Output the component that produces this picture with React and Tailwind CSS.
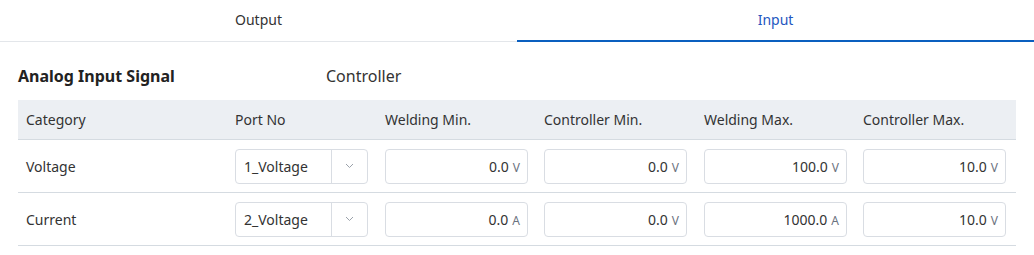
import React from "react";

const font = { fontFamily: '"Noto Sans", "Open Sans", sans-serif' };

function Chevron() {
  return (
    <svg width="9" height="6" viewBox="0 0 9 6" fill="none">
      <path d="M1 1l3.5 3.5L8 1" stroke="#9aa1aa" strokeWidth="1" />
    </svg>
  );
}

function Select({ value }) {
  return (
    <div className="flex h-[35px] w-[133px] items-stretch rounded-[4px] border border-[#d9dde3] bg-white">
      <div className="flex flex-1 items-center pl-[8px] text-[14px] text-[#333]">{value}</div>
      <div className="flex w-[36px] items-center justify-center border-l border-[#d9dde3]">
        <Chevron />
      </div>
    </div>
  );
}

function NumInput({ value, unit }) {
  return (
    <div className="flex h-[35px] w-[143px] items-center justify-end rounded-[4px] border border-[#d9dde3] bg-white pr-[7px]">
      <div className="flex items-baseline">
        <span className="text-[14px] text-[#333]">{value}</span>
        <span className="ml-[4px] text-[12px] text-[#6b7280]">{unit}</span>
      </div>
    </div>
  );
}

const rows = [
  { cat: "Voltage", port: "1_Voltage", vals: [["0.0", "V"], ["0.0", "V"], ["100.0", "V"], ["10.0", "V"]] },
  { cat: "Current", port: "2_Voltage", vals: [["0.0", "A"], ["0.0", "V"], ["1000.0", "A"], ["10.0", "V"]] },
];

const colW = ["w-[209px]", "w-[150px]", "w-[159px]", "w-[160px]", "w-[159px]", "flex-1"];

export default function App() {
  return (
    <div className="h-[255px] w-[1034px] bg-white" style={font}>
      <div className="flex h-[42px] border-b border-[#e3e6ea]">
        <div className="flex flex-1 items-center justify-center pb-[2px] text-[14px] text-[#333]">Output</div>
        <div className="relative flex flex-1 items-center justify-center pb-[2px] text-[14px] text-[#2456c0]">
          Input
          <div className="absolute bottom-[-1px] left-0 right-0 h-[2px] bg-[#0a5fbf]" />
        </div>
      </div>
      <div className="px-[18px]">
        <div className="flex h-[58px] items-center pt-[10px]">
          <div className="w-[308px] text-[16px] font-bold text-[#222]">Analog Input Signal</div>
          <div className="text-[16px] text-[#333]">Controller</div>
        </div>
        <div className="flex h-[40px] items-center border-b border-[#d5dbe1] bg-[#eceff3] text-[14px] text-[#333]">
          {["Category", "Port No", "Welding Min.", "Controller Min.", "Welding Max.", "Controller Max."].map((h, i) => (
            <div key={h} className={`${colW[i]} px-[8px]`}>{h}</div>
          ))}
        </div>
        {rows.map((r) => (
          <div key={r.cat} className="flex h-[53px] items-center border-b border-[#d5dbe1] text-[14px] text-[#333]">
            <div className={`${colW[0]} px-[8px]`}>{r.cat}</div>
            <div className={`${colW[1]} px-[8px]`}>
              <Select value={r.port} />
            </div>
            {r.vals.map(([v, u], i) => (
              <div key={i} className={`${colW[i + 2]} px-[8px]`}>
                <NumInput value={v} unit={u} />
              </div>
            ))}
          </div>
        ))}
      </div>
    </div>
  );
}
